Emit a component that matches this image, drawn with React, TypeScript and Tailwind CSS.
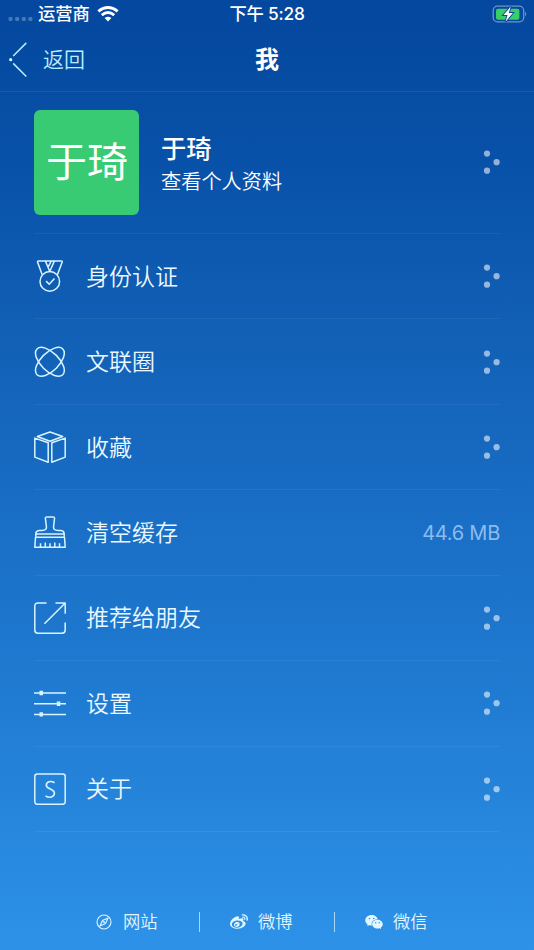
import type { ReactNode } from "react";
import { AiFillWechat } from "react-icons/ai";
import { FaWeibo } from "react-icons/fa";

function Dots() {
  return (
    <svg className="block h-6 w-[17px]" viewBox="0 0 17 24" fill="#fff" fillOpacity=".56">
      <circle cx="4" cy="3.6" r="3.1" />
      <circle cx="13.6" cy="12.2" r="3.1" />
      <circle cx="4" cy="20.7" r="3.1" />
    </svg>
  );
}

function RowIcon({ children }: { children: ReactNode }) {
  return (
    <svg className="block h-8 w-8 shrink-0" viewBox="0 0 32 32" fill="none" stroke="#d9f4ff" strokeWidth="1.5" strokeLinejoin="round">
      {children}
    </svg>
  );
}

const rows: { label: string; value?: string; icon: ReactNode }[] = [
  {
    label: "身份认证",
    icon: (
      <>
        <circle cx="15.8" cy="21.4" r="9.8" />
        <path d="M8.2 14.7 3.5 2Q3.3.9 4.4.9H27.4Q28.5.9 28.2 2L23.4 14.7M11.3.9 15.8 11.5 20.4.9M14 7.4 17.3.9M12.1 21.1 15.2 24.2 20.5 18.6" />
      </>
    ),
  },
  {
    label: "文联圈",
    icon: (
      <>
        <ellipse cx="15.9" cy="15.8" rx="18.2" ry="9.1" transform="rotate(45 15.9 15.8)" />
        <ellipse cx="15.9" cy="15.8" rx="18.2" ry="9.1" transform="rotate(-45 15.9 15.8)" />
      </>
    ),
  },
  {
    label: "收藏",
    icon: <path d="M3.3 5.5 16 1 28.7 5.5 16 10.2ZM.8 7.1 14.2 11.7V31.2L.8 26.1ZM31.2 7.1 17.8 11.7V31.2L31.2 26.1Z" />,
  },
  {
    label: "清空缓存",
    value: "44.6 MB",
    icon: (
      <path d="M12.9.9H18.9Q20.6.9 20.5 2.6L19.6 10.6Q19.2 14.5 24 14.5H27Q30.2 14.8 30.2 18.1H1.8Q1.8 14.8 5 14.5H8Q12.8 14.5 12.4 10.6L11.4 2.6Q11.2.9 12.9.9ZM1.8 18.1V21.2M30.2 18.1V21.2M1.5 21.3H30.5L31.2 31.3H.8ZM6.5 31V27.2M11.3 31V26.4M16 31V27.2M20.8 31V26.4M25.5 31V27.2" />
    ),
  },
  {
    label: "推荐给朋友",
    icon: <path d="M12.5.9H4Q.8.9.8 4V28Q.8 31.2 4 31.2H28Q31.2 31.2 31.2 28V20.5M10.4 21.8 31 1.2M21.5.9H31.2V11.7" />,
  },
  {
    label: "设置",
    icon: (
      <>
        <path d="M0 6H32M0 16.7H32M0 27.4H32" />
        <path d="M5.5 6H9M22.8 16.7H26.3M5.5 27.4H9" strokeWidth="4.4" />
      </>
    ),
  },
  {
    label: "关于",
    icon: (
      <>
        <rect x=".8" y=".9" width="30.4" height="30.4" rx="2.5" />
        <path d="M20.6 9.7C17 7.6 12.3 8.5 12.3 12.2C12.3 16.4 20.4 15.5 20.4 20.1C20.4 24.5 15.2 25.3 11.5 22.8" strokeWidth="1.6" />
      </>
    ),
  },
];

export default function App() {
  return (
    <main className="flex h-[950px] w-[534px] flex-col overflow-hidden bg-linear-[180deg,#04479e_0%,#0952a9_18%,#1160b6_35%,#196dc4_53%,#207cd2_74%,#2d92e8_100%] font-['Inter','Noto_Sans_CJK_SC',sans-serif] text-white">
      <header className="h-[92px] shrink-0 border-b border-white/8">
        <div className="grid h-7 grid-cols-3 items-center">
          <div className="flex items-center pl-2">
            <svg className="mt-[9px] h-1 w-[25px]" viewBox="0 0 25 4" fill="#fff" fillOpacity=".26">
              <rect x=".5" width="4" height="4" rx="1.2" />
              <rect x="7.2" width="4" height="4" rx="1.2" />
              <rect x="13.8" width="4" height="4" rx="1.2" />
              <rect x="20.4" width="4" height="4" rx="1.2" />
            </svg>
            <span className="ml-[5px] text-[17.3px] leading-7 font-medium">运营商</span>
            <svg className="ml-[7px] h-4 w-[22px]" viewBox="0 0 22 16" fill="none" stroke="#fff" strokeWidth="2.9">
              <path d="M1.3 5.4Q11-2.2 20.7 5.4M4.8 9.1Q11 4.1 17.2 9.1" />
              <path d="M11 15.5 7.6 12.1Q11 9.2 14.4 12.1Z" fill="#fff" stroke="none" />
            </svg>
          </div>
          <div className="text-center text-[17.3px] leading-7 font-medium tracking-[-0.2px] whitespace-nowrap">下午 5:28</div>
          <svg className="mr-[7px] h-[18px] w-[35px] justify-self-end" viewBox="0 0 35 18">
            <rect x="1.2" y="1.1" width="30.5" height="15.8" rx="4.4" fill="none" stroke="#fff" strokeOpacity=".42" strokeWidth="1.3" />
            <path d="M33.2 6.4Q35.4 9 33.2 11.6Z" fill="#fff" fillOpacity=".45" />
            <rect x="4" y="3.7" width="23.4" height="11" rx="2" fill="#38cf64" />
            <path d="M18.8 1.5 11.4 10H15.5L13.5 16.8 20.9 7.9H16.8Z" fill="#fff" stroke="#07439a" strokeWidth="1.8" paintOrder="stroke" />
          </svg>
        </div>
        <div className="grid h-16 grid-cols-3 items-center">
          <div className="flex items-center pl-2 text-[#b9eeff]">
            <svg className="h-9 w-5" viewBox="0 0 20 36" fill="none" stroke="#b9eeff" strokeWidth="1.5">
              <path d="M18.3 .9 5.2 14M5.2 21.4 18.3 34.5" />
              <circle cx="2.7" cy="17.7" r="1.6" fill="#d5f5ff" stroke="none" />
            </svg>
            <span className="ml-[15px] text-[21px] leading-8 font-[350]">返回</span>
          </div>
          <h1 className="text-center text-[24px] leading-8 font-bold">我</h1>
        </div>
      </header>

      <div className="flex flex-col px-[34px]">
        <section className="flex h-[142px] items-center border-b border-white/6 pb-px">
          <div className="flex h-[105px] w-[105px] items-center justify-center rounded-[6px] bg-[#38cb73]">
            <span className="pl-px text-[41px] leading-none">于琦</span>
          </div>
          <div className="ml-[22px] flex-1 pt-[7px]">
            <div className="text-[25.3px] leading-8 font-medium">于琦</div>
            <div className="text-[20.2px] leading-[34px] font-[350]">查看个人资料</div>
          </div>
          <Dots />
        </section>
        {rows.map((row) => (
          <section key={row.label} className="flex h-[85.43px] items-center border-b border-white/6">
            <RowIcon>{row.icon}</RowIcon>
            <span className="ml-5 flex-1 pt-px text-[23px] leading-8 font-[350] text-[#ebf8ff]">{row.label}</span>
            {row.value ? <span className="pt-0.5 text-[20px] tracking-[-0.25px] text-[#8dbbee]">{row.value}</span> : <Dots />}
          </section>
        ))}
      </div>

      <footer className="mt-[62px] flex h-14 items-center pl-16 text-[17.3px] leading-7 text-[#e1f6ff]">
        <div className="flex w-[135px] items-center pl-8">
          <svg className="h-4 w-4" viewBox="0 0 16 16" fill="none" stroke="#e1f6ff" strokeWidth="1.1">
            <circle cx="8" cy="8" r="7" />
            <path d="M12 4 9.5 9.5 4 12 6.5 6.5Z" />
            <circle cx="8" cy="8" r="1" fill="#e1f6ff" stroke="none" />
          </svg>
          <span className="ml-[11px] font-[350]">网站</span>
        </div>
        <div className="h-5 w-px bg-[#a8d8fa]" />
        <div className="flex w-[134px] items-center pl-[30px]">
          <FaWeibo className="h-[18px] w-[18px]" />
          <span className="ml-[10px] font-[350]">微博</span>
        </div>
        <div className="h-5 w-px bg-[#a8d8fa]" />
        <div className="flex w-[135px] items-center pl-[29px]">
          <AiFillWechat className="h-5 w-5" />
          <span className="ml-[9px] font-[350]">微信</span>
        </div>
      </footer>
    </main>
  );
}
